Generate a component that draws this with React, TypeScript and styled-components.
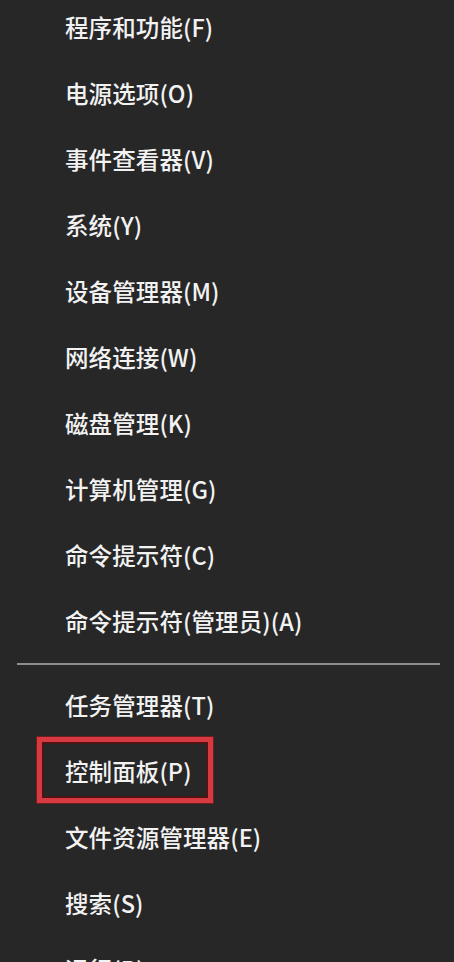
import React from "react";
import styled, { createGlobalStyle } from "styled-components";

const Global = createGlobalStyle`
  html, body {
    margin: 0;
    padding: 0;
    background: #272727;
    overflow: hidden;
  }
  body {
    font-family: "Noto Sans CJK SC", "Noto Sans", "Liberation Sans", sans-serif;
    -webkit-font-smoothing: antialiased;
  }
`;

const Menu = styled.div`
  display: flex;
  flex-direction: column;
  margin-top: -5px;
  width: 454px;
  height: 1010px;
  background: #272727;
`;

const Row = styled.div`
  position: relative;
  display: flex;
  align-items: center;
  height: 66px;
  padding-left: 65px;
  box-sizing: border-box;
`;

const Label = styled.span`
  color: #f2f2f2;
  font-size: 23.5px;
  line-height: 1;
  font-weight: 500;
  letter-spacing: 0.1px;
  white-space: nowrap;
`;

const Separator = styled.div`
  height: 18px;
  display: flex;
  align-items: center;
  padding: 0 14px 0 17px;
  &::after {
    content: "";
    flex: 1;
    height: 2px;
    background: #8e8e8e;
  }
`;

const Frame = styled.div`
  position: absolute;
  left: 37px;
  top: -2px;
  width: 176px;
  height: 66px;
  box-sizing: border-box;
  border: 5px solid #d6393f;
  box-shadow: inset 0 0 0 2px #4e1416, 0 0 0 1px #6e1d20;
  pointer-events: none;
`;

type Item = { text: string; highlight?: boolean };

const top: Item[] = [
  { text: "程序和功能(F)" },
  { text: "电源选项(O)" },
  { text: "事件查看器(V)" },
  { text: "系统(Y)" },
  { text: "设备管理器(M)" },
  { text: "网络连接(W)" },
  { text: "磁盘管理(K)" },
  { text: "计算机管理(G)" },
  { text: "命令提示符(C)" },
  { text: "命令提示符(管理员)(A)" },
];

const bottom: Item[] = [
  { text: "任务管理器(T)" },
  { text: "控制面板(P)", highlight: true },
  { text: "文件资源管理器(E)" },
  { text: "搜索(S)" },
  { text: "运行(R)" },
];

const MenuRow = ({ item }: { item: Item }) => (
  <Row>
    <Label>{item.text}</Label>
    {item.highlight && <Frame />}
  </Row>
);

export default function App() {
  return (
    <>
      <Global />
      <Menu>
        {top.map((it) => (
          <MenuRow key={it.text} item={it} />
        ))}
        <Separator />
        {bottom.map((it) => (
          <MenuRow key={it.text} item={it} />
        ))}
      </Menu>
    </>
  );
}
